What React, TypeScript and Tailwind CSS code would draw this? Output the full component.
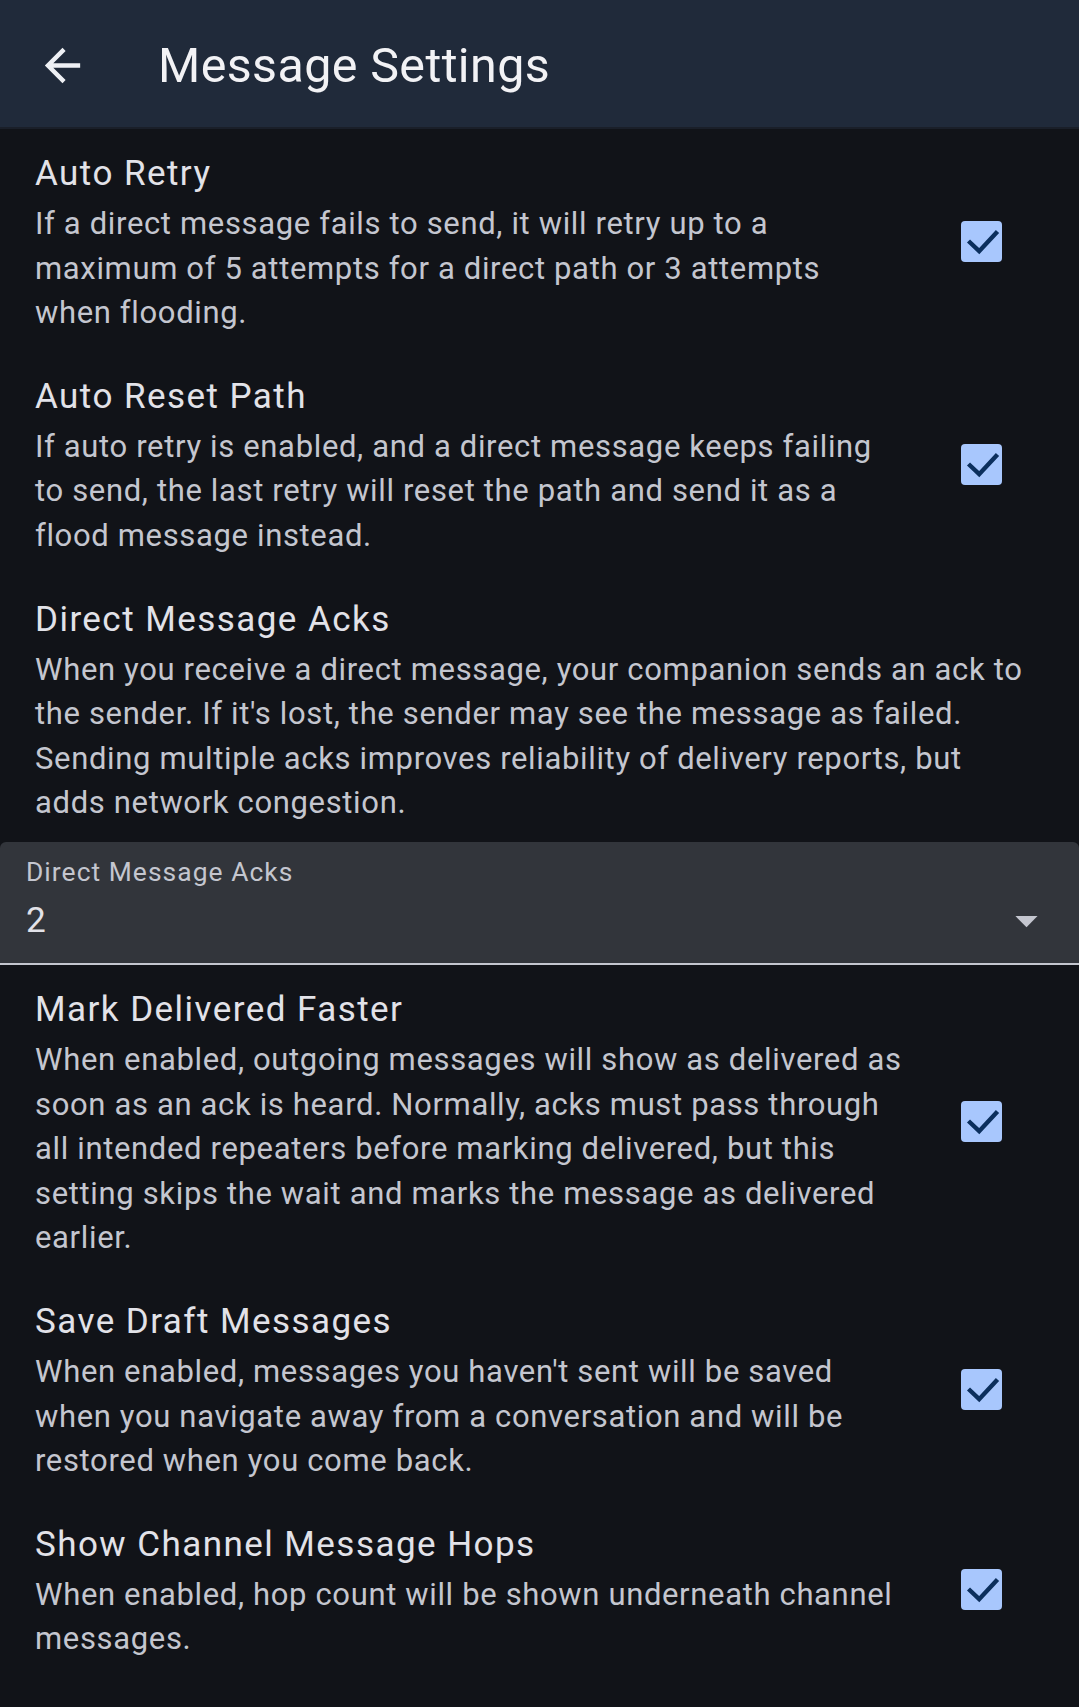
import React from 'react';

type Setting = {
    title: string;
    lines: string[];
    checked?: boolean;
};

const topSettings: Setting[] = [
    {
        title: 'Auto Retry',
        lines: [
            'If a direct message fails to send, it will retry up to a',
            'maximum of 5 attempts for a direct path or 3 attempts',
            'when flooding.',
        ],
        checked: true,
    },
    {
        title: 'Auto Reset Path',
        lines: [
            'If auto retry is enabled, and a direct message keeps failing',
            'to send, the last retry will reset the path and send it as a',
            'flood message instead.',
        ],
        checked: true,
    },
    {
        title: 'Direct Message Acks',
        lines: [
            'When you receive a direct message, your companion sends an ack to',
            "the sender. If it's lost, the sender may see the message as failed.",
            'Sending multiple acks improves reliability of delivery reports, but',
            'adds network congestion.',
        ],
    },
];

const bottomSettings: Setting[] = [
    {
        title: 'Mark Delivered Faster',
        lines: [
            'When enabled, outgoing messages will show as delivered as',
            'soon as an ack is heard. Normally, acks must pass through',
            'all intended repeaters before marking delivered, but this',
            'setting skips the wait and marks the message as delivered',
            'earlier.',
        ],
        checked: true,
    },
    {
        title: 'Save Draft Messages',
        lines: [
            "When enabled, messages you haven't sent will be saved",
            'when you navigate away from a conversation and will be',
            'restored when you come back.',
        ],
        checked: true,
    },
    {
        title: 'Show Channel Message Hops',
        lines: [
            'When enabled, hop count will be shown underneath channel',
            'messages.',
        ],
        checked: true,
    },
];

const Checkbox: React.FC<{ checked: boolean }> = ({ checked }) => (
    <div
        className={`flex h-[41px] w-[41px] items-center justify-center rounded-[4px] ${
            checked ? 'bg-[#a8c7fd]' : 'border-[4px] border-[#c4c6cf]'
        }`}
    >
        {checked && (
            <svg width="41" height="41" viewBox="0 0 41 41" fill="none">
                <polyline
                    points="7.5,20 18.2,30.2 36.5,10.5"
                    stroke="#0b2f5d"
                    strokeWidth="4.4"
                    strokeLinecap="butt"
                    strokeLinejoin="miter"
                />
            </svg>
        )}
    </div>
);

const SettingRow: React.FC<{ setting: Setting }> = ({ setting }) => (
    <div className="flex items-center pb-[16px] pl-[35px] pr-[35px] pt-[18px]">
        <div className="min-w-0 flex-1">
            <div className="text-[35px] leading-[53px] tracking-[1.45px] text-[#e2e2e8]">{setting.title}</div>
            <p className="mt-[2px] text-[31px] leading-[44.6px] tracking-[0.65px] text-[#c4c6cf]">
                {setting.lines.map((line, i) => (
                    <span key={i} className="block whitespace-nowrap">
                        {line}
                    </span>
                ))}
            </p>
        </div>
        {setting.checked !== undefined && (
            <div className="mr-[10px] flex w-[106px] justify-center">
                <Checkbox checked={setting.checked} />
            </div>
        )}
    </div>
);

export default function App() {
    return (
        <div className="min-h-screen bg-[#111318] font-['Roboto',sans-serif]">
            {/* Top app bar */}
            <header className="flex h-[129px] items-center border-b-2 border-[#1a1f29] bg-[#202a3a] pt-[4px]">
                <button className="ml-[9px] flex h-[106px] w-[106px] items-center justify-center" aria-label="Back">
                    <svg width="53" height="53" viewBox="0 0 24 24" fill="#eef0f4">
                        <path d="M20 11H7.83l5.59-5.59L12 4l-8 8 8 8 1.41-1.41L7.83 13H20v-2z" />
                    </svg>
                </button>
                <h1 className="ml-[43px] text-[48.4px] leading-[64px] tracking-[0.4px] text-[#f2f2f5]">Message Settings</h1>
            </header>

            {topSettings.map((s) => (
                <SettingRow key={s.title} setting={s} />
            ))}

            {/* Acks dropdown */}
            <div className="h-[123px] rounded-t-[6px] border-b-[2px] border-[#c4c6cf] bg-[#32353b] pl-[26px] pr-[26px] pt-[10px]">
                <div className="text-[26.4px] leading-[40px] tracking-[1.05px] text-[#c4c6cf]">Direct Message Acks</div>
                <div className="mt-[2px] flex h-[53px] items-center justify-between">
                    <span className="text-[35.2px] tracking-[1px] text-[#e2e2e8]">2</span>
                    <svg width="53" height="53" viewBox="0 0 24 24" fill="#c4c6cf">
                        <path d="M7 10l5 5 5-5z" />
                    </svg>
                </div>
            </div>

            {bottomSettings.map((s) => (
                <SettingRow key={s.title} setting={s} />
            ))}
        </div>
    );
}
